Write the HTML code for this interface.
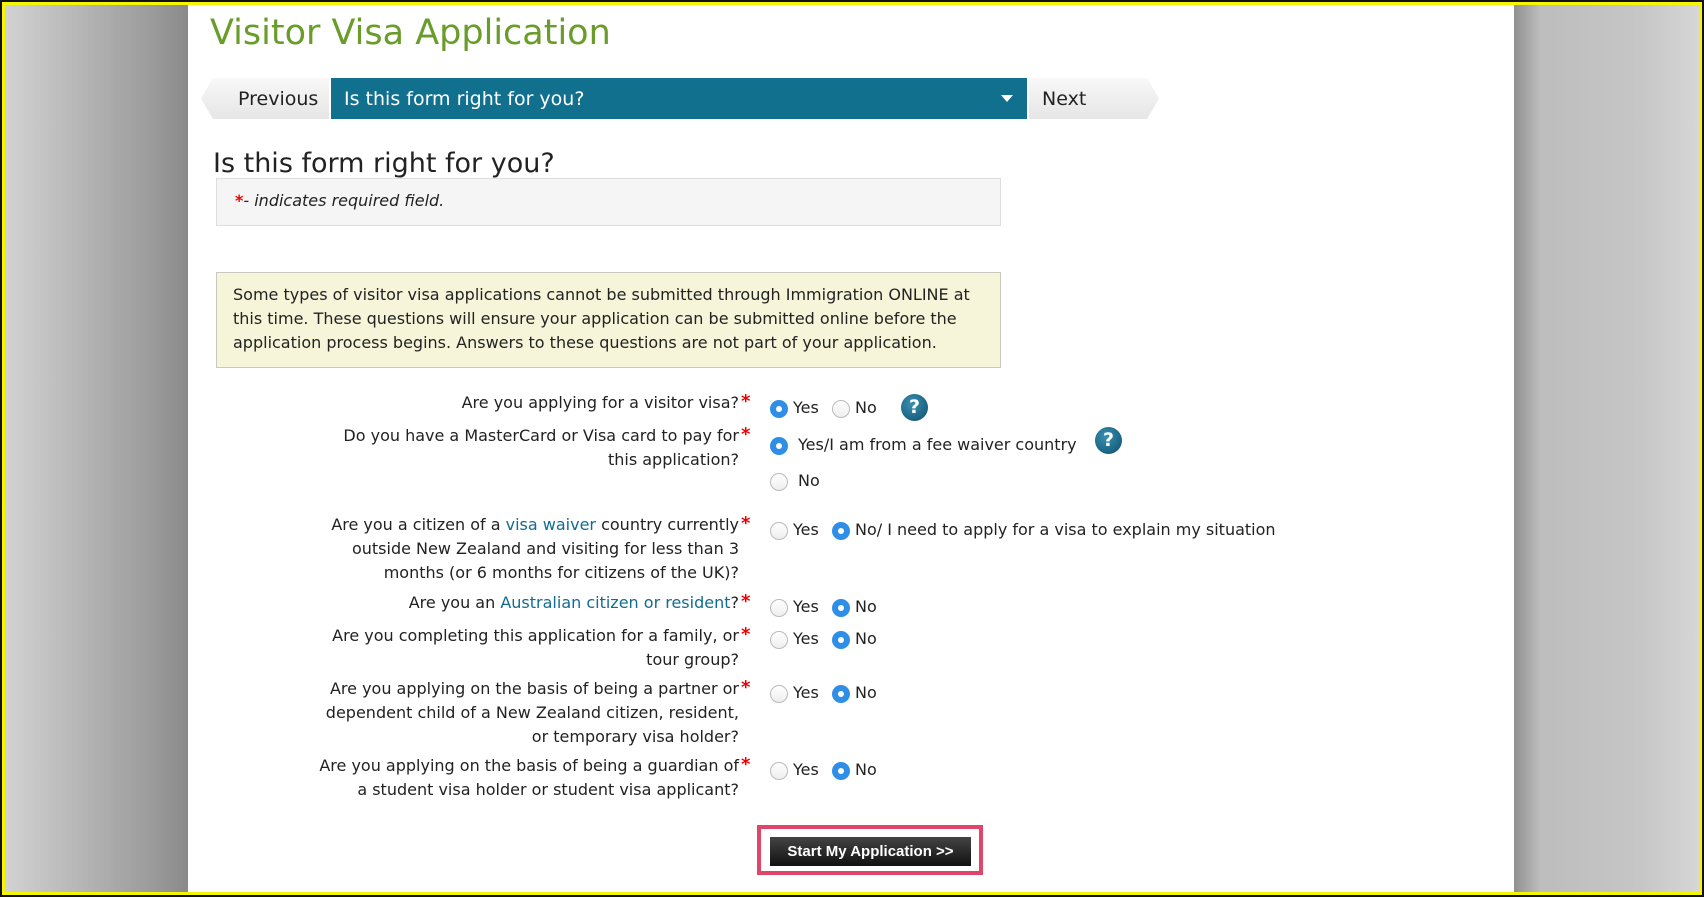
<!DOCTYPE html>
<html><head><meta charset="utf-8"><style>
*{margin:0;padding:0;box-sizing:border-box}
body{width:1704px;height:897px;overflow:hidden;position:relative;font-family:"DejaVu Sans",Verdana,sans-serif;color:#222;
background:linear-gradient(90deg,#d4d4d4 0,#9c9c9c 150px,#8a8a8a 188px,#fff 188px,#fff 1514px,#909090 1514px,#bdbdbd 1540px,#c6c6c6 1640px,#d8d8d8 1704px);}
.frame{position:absolute;inset:0;border:2px solid #111;box-shadow:inset 0 0 0 3px #f5f500;pointer-events:none}
.a{position:absolute;white-space:nowrap}
.t{font-size:16px}
.o{margin-top:3px}
.lab{position:absolute;right:965px;text-align:right;font-size:16px;line-height:24px;white-space:nowrap}
.star{position:absolute;left:741px;color:#e00;font-size:18px;font-weight:bold}
.r{position:absolute;width:18px;height:18px;border-radius:50%;border:1px solid #bbb;background:linear-gradient(#fff,#eee);margin-top:2px}
.r.on{border:none;background:#2f8fe6}
.r.on::after{content:"";position:absolute;left:6px;top:6px;width:6px;height:6px;border-radius:50%;background:#fff}
.h{position:absolute;width:27px;height:27px;border-radius:50%;background:radial-gradient(circle at 40% 35%,#3a8fb0,#0d4f6e);color:#fff;font-weight:bold;font-size:19px;text-align:center;line-height:27px}
a{color:#126c8f;text-decoration:none}
</style></head><body>
<div class="a" style="left:210px;top:13px;font-size:35px;color:#6a9c2a">Visitor Visa Application</div>
<div class="a" style="left:201px;top:78px;width:128px;height:41px;background:linear-gradient(#f8f8f8,#e6e6e6);clip-path:polygon(12px 0,100% 0,100% 100%,12px 100%,0 50%)"></div>
<div class="a" style="left:238px;top:88px;font-size:19px">Previous</div>
<div class="a" style="left:331px;top:78px;width:696px;height:41px;background:#12708f"></div>
<div class="a" style="left:344px;top:88px;font-size:19px;color:#fff">Is this form right for you?</div>
<div class="a" style="left:1001px;top:95px;width:0;height:0;border-left:6px solid transparent;border-right:6px solid transparent;border-top:7px solid #fff"></div>
<div class="a" style="left:1029px;top:78px;width:130px;height:41px;background:linear-gradient(#f8f8f8,#e6e6e6);clip-path:polygon(0 0,calc(100% - 12px) 0,100% 50%,calc(100% - 12px) 100%,0 100%)"></div>
<div class="a" style="left:1042px;top:88px;font-size:19px">Next</div>
<div class="a" style="left:213px;top:148px;font-size:27px">Is this form right for you?</div>
<div class="a" style="left:216px;top:178px;width:785px;height:48px;background:#f5f5f5;border:1px solid #ddd"></div>
<div class="a" style="left:235px;top:191px;font-size:16px;font-style:italic"><span style="color:#e00;font-weight:bold;font-style:normal">*</span>- indicates required field.</div>
<div class="a" style="left:216px;top:272px;width:785px;height:96px;background:#f6f5d9;border:1px solid #c8c8c0"></div>
<div class="a t" style="left:233px;top:283px;line-height:24px">Some types of visitor visa applications cannot be submitted through Immigration ONLINE at<br>this time. These questions will ensure your application can be submitted online before the<br>application process begins. Answers to these questions are not part of your application.</div>

<div class="lab" style="top:391px">Are you applying for a visitor visa?</div><div class="star" style="top:391px">*</div>
<div class="r on" style="left:770px;top:398px"></div><div class="a t o" style="left:793px;top:395px">Yes</div>
<div class="r" style="left:832px;top:398px"></div><div class="a t o" style="left:855px;top:395px">No</div>
<div class="h" style="left:901px;top:394px">?</div>

<div class="lab" style="top:424px">Do you have a MasterCard or Visa card to pay for<br>this application?</div><div class="star" style="top:424px">*</div>
<div class="r on" style="left:770px;top:435px"></div><div class="a t o" style="left:798px;top:432px">Yes/I am from a fee waiver country</div>
<div class="h" style="left:1095px;top:427px">?</div>
<div class="r" style="left:770px;top:471px"></div><div class="a t o" style="left:798px;top:468px">No</div>

<div class="lab" style="top:513px">Are you a citizen of a <a>visa waiver</a> country currently<br>outside New Zealand and visiting for less than 3<br>months (or 6 months for citizens of the UK)?</div><div class="star" style="top:513px">*</div>
<div class="r" style="left:770px;top:520px"></div><div class="a t o" style="left:793px;top:517px">Yes</div>
<div class="r on" style="left:832px;top:520px"></div><div class="a t o" style="left:855px;top:517px">No/ I need to apply for a visa to explain my situation</div>

<div class="lab" style="top:591px">Are you an <a>Australian citizen or resident</a>?</div><div class="star" style="top:591px">*</div>
<div class="r" style="left:770px;top:597px"></div><div class="a t o" style="left:793px;top:594px">Yes</div>
<div class="r on" style="left:832px;top:597px"></div><div class="a t o" style="left:855px;top:594px">No</div>

<div class="lab" style="top:624px">Are you completing this application for a family, or<br>tour group?</div><div class="star" style="top:624px">*</div>
<div class="r" style="left:770px;top:629px"></div><div class="a t o" style="left:793px;top:626px">Yes</div>
<div class="r on" style="left:832px;top:629px"></div><div class="a t o" style="left:855px;top:626px">No</div>

<div class="lab" style="top:677px">Are you applying on the basis of being a partner or<br>dependent child of a New Zealand citizen, resident,<br>or temporary visa holder?</div><div class="star" style="top:677px">*</div>
<div class="r" style="left:770px;top:683px"></div><div class="a t o" style="left:793px;top:680px">Yes</div>
<div class="r on" style="left:832px;top:683px"></div><div class="a t o" style="left:855px;top:680px">No</div>

<div class="lab" style="top:754px">Are you applying on the basis of being a guardian of<br>a student visa holder or student visa applicant?</div><div class="star" style="top:754px">*</div>
<div class="r" style="left:770px;top:760px"></div><div class="a t o" style="left:793px;top:757px">Yes</div>
<div class="r on" style="left:832px;top:760px"></div><div class="a t o" style="left:855px;top:757px">No</div>

<div class="a" style="left:757px;top:825px;width:226px;height:50px;border:4px solid #e0456a;background:#fff"></div>
<div class="a" style="left:770px;top:837px;width:201px;height:29px;background:linear-gradient(#444,#111);color:#fff;font-family:'Liberation Sans',Arial,sans-serif;font-size:15px;font-weight:bold;text-align:center;line-height:29px">Start My Application &gt;&gt;</div>
<div class="frame"></div>
</body></html>
